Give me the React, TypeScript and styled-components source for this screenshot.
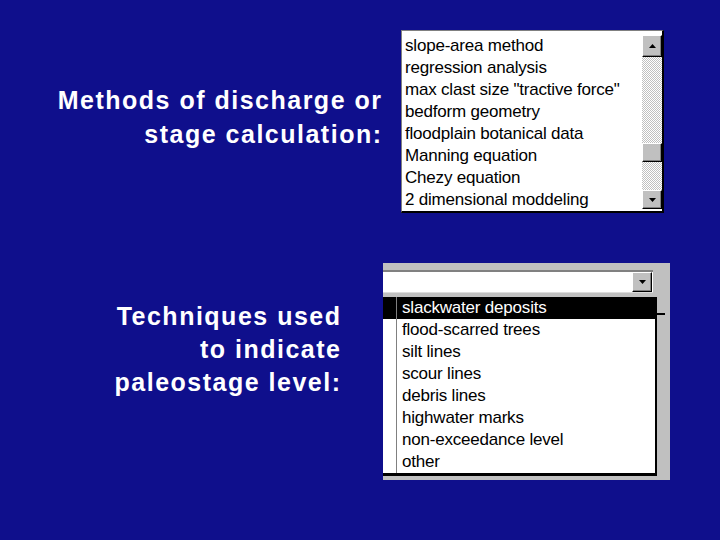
import { FC } from "react";
import styled, { createGlobalStyle } from "styled-components";

const GlobalStyle = createGlobalStyle`
  body {
    margin: 0;
    background: #0f0f8c;
  }
`;

const Page = styled.div`
  width: 720px;
  height: 540px;
  box-sizing: border-box;
  padding-top: 30px;
  background: #0f0f8c;
  display: flex;
  flex-direction: column;
  gap: 50px;
  overflow: hidden;
`;

const Section = styled.section<{ $gap: number }>`
  display: flex;
  align-items: flex-start;
  gap: ${(p) => p.$gap}px;
`;

// trailing letter-spacing is pulled back so the glyphs end at the column edge
const Label = styled.h2<{ $width: number; $top: number; $lineHeight: number }>`
  margin: ${(p) => p.$top}px -1.5px 0 0;
  width: ${(p) => p.$width + 1.5}px;
  text-align: right;
  color: #ffffff;
  font-family: "Liberation Sans", Arial, sans-serif;
  font-weight: bold;
  font-size: 25px;
  line-height: ${(p) => p.$lineHeight}px;
  letter-spacing: 1.5px;
`;

// classic listbox with a vertical scroll bar
const ListBox = styled.div`
  width: 263px;
  height: 183px;
  box-sizing: border-box;
  padding-top: 4px;
  background: #ffffff;
  border-top: 1px solid #808080;
  border-left: 1px solid #808080;
  border-right: 2px solid #000000;
  border-bottom: 2px solid #000000;
  display: flex;
`;

const Items = styled.ul`
  flex: 1;
  margin: 0;
  padding: 0 0 0 3px;
  list-style: none;
`;

const Item = styled.li<{ $selected?: boolean }>`
  height: 22px;
  line-height: 22px;
  font-family: "Liberation Sans", Arial, sans-serif;
  font-size: 17px;
  letter-spacing: -0.2px;
  white-space: nowrap;
  color: ${(p) => (p.$selected ? "#ffffff" : "#000000")};
`;

const ScrollBar = styled.div`
  width: 20px;
  height: 174px;
  display: flex;
  flex-direction: column;
`;

const ScrollButton = styled.div<{ $height: number }>`
  height: ${(p) => p.$height}px;
  box-sizing: border-box;
  background: #c0c0c0;
  border-top: 1px solid #ffffff;
  border-left: 1px solid #ffffff;
  border-right: 1px solid #000000;
  border-bottom: 1px solid #000000;
  box-shadow: inset -1px -1px #808080;
  display: flex;
  align-items: center;
  justify-content: center;
`;

const Track = styled.div`
  flex: 1;
  background: repeating-conic-gradient(#c0c0c0 0 25%, #ffffff 0 50%) 0 0 / 2px 2px;
`;

const Thumb = styled(ScrollButton)<{ $offset: number }>`
  margin-top: ${(p) => p.$offset}px;
`;

// combo box with its drop-down list open
const Panel = styled.div`
  width: 287px;
  height: 217px;
  box-sizing: border-box;
  padding-top: 7px;
  background: #c0c0c0;
  display: flex;
  flex-direction: column;
  gap: 4px;
`;

const Combo = styled.div`
  width: 270px;
  height: 23px;
  box-sizing: border-box;
  background: #ffffff;
  border-top: 2px solid #808080;
  border-bottom: 1px solid #dcdcdc;
  display: flex;
  justify-content: flex-end;
  align-items: center;
  padding-right: 1px;
`;

const ComboButton = styled(ScrollButton)`
  width: 20px;
`;

const DropRow = styled.div`
  display: flex;
  align-items: flex-start;
`;

const DropList = styled.ul`
  width: 274px;
  height: 179px;
  box-sizing: border-box;
  margin: 0;
  padding: 0;
  list-style: none;
  background: #ffffff;
  border-right: 2px solid #000000;
  border-bottom: 3px solid #000000;
`;

const DropItem = styled.li<{ $selected?: boolean }>`
  display: flex;
  height: 22px;
  background: ${(p) => (p.$selected ? "#000000" : "transparent")};
`;

const LeadCell = styled.span`
  width: 13px;
  border-right: 1px solid #808080;
`;

const ItemText = styled(Item).attrs({ as: "span" })`
  padding-left: 5px;
`;

const Edge = styled.div`
  width: 13px;
  display: flex;
  flex-direction: column;
`;

const EdgeLine = styled.div`
  margin-top: 16px;
  width: 8px;
  height: 2px;
  background: #000000;
`;

const Arrow: FC<{ up?: boolean }> = ({ up }) => (
  <svg width="7" height="4" viewBox="0 0 7 4">
    <polygon points={up ? "0,4 7,4 3.5,0" : "0,0 7,0 3.5,4"} fill="#000" />
  </svg>
);

const methods = [
  "slope-area method",
  "regression analysis",
  'max clast size "tractive force"',
  "bedform geometry",
  "floodplain botanical data",
  "Manning equation",
  "Chezy equation",
  "2 dimensional moddeling",
];

const techniques = [
  "slackwater deposits",
  "flood-scarred trees",
  "silt lines",
  "scour lines",
  "debris lines",
  "highwater marks",
  "non-exceedance level",
  "other",
];

const App: FC = () => {
  return (
    <Page>
      <GlobalStyle />
      <Section $gap={20}>
        <Label $width={381} $top={53} $lineHeight={34}>
          Methods of discharge or
          <br />
          stage calculation:
        </Label>
        <ListBox>
          <Items>
            {methods.map((m) => (
              <Item key={m}>{m}</Item>
            ))}
          </Items>
          <ScrollBar>
            <ScrollButton $height={22}>
              <Arrow up />
            </ScrollButton>
            <Track>
              <Thumb $height={19} $offset={86} />
            </Track>
            <ScrollButton $height={19}>
              <Arrow />
            </ScrollButton>
          </ScrollBar>
        </ListBox>
      </Section>
      <Section $gap={43}>
        <Label $width={340} $top={37} $lineHeight={33}>
          Techniques used
          <br />
          to indicate
          <br />
          paleostage level:
        </Label>
        <Panel>
          <Combo>
            <ComboButton $height={20}>
              <Arrow />
            </ComboButton>
          </Combo>
          <DropRow>
            <DropList>
              {techniques.map((t, i) => (
                <DropItem key={t} $selected={i === 0}>
                  <LeadCell />
                  <ItemText $selected={i === 0}>{t}</ItemText>
                </DropItem>
              ))}
            </DropList>
            <Edge>
              <EdgeLine />
            </Edge>
          </DropRow>
        </Panel>
      </Section>
    </Page>
  );
};

export default App;
